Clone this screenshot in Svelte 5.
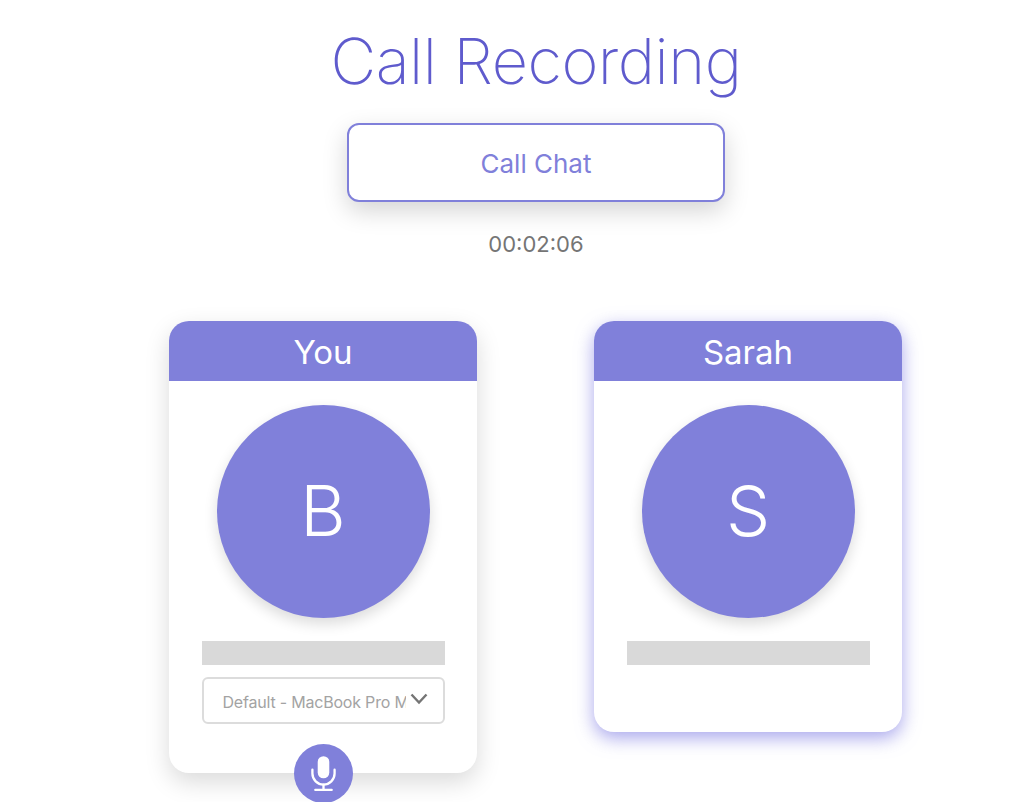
<script lang="ts">
  interface Peer {
    name: string;
    initial: string;
    active: boolean;
    device?: string;
  }

  const peers: Peer[] = [
    { name: 'You', initial: 'B', active: false, device: 'Default - MacBook Pro Microphone' },
    { name: 'Sarah', initial: 'S', active: true },
  ];
</script>

<div class="page">
  <h1>Call Recording</h1>
  <button class="chat">Call Chat</button>
  <div class="timer">00:02:06</div>

  <div class="peers">
    {#each peers as peer (peer.name)}
      <div class="card" class:active={peer.active}>
        <div class="name">{peer.name}</div>
        <div class="body">
          <div class="avatar">{peer.initial}</div>
          <div class="meter"></div>
          {#if peer.device}
            <div class="select">
              <span class="device">{peer.device}</span>
              <svg class="chevron" viewBox="0 0 18 12" width="18" height="12" aria-hidden="true">
                <path d="M1.5 1.5 9 9.5l7.5-8" fill="none" stroke="#757575" stroke-width="2.4" />
              </svg>
            </div>
          {/if}
        </div>
        {#if peer.device}
          <button class="mic" aria-label="Mute microphone">
            <svg viewBox="0 0 28 38" width="27" height="37" aria-hidden="true">
              <rect x="8" y="1" width="12" height="23" rx="6" fill="#fff" />
              <path d="M2.5 15v4a11.5 11.5 0 0 0 23 0v-4" fill="none" stroke="#fff" stroke-width="2.4" stroke-linecap="round" />
              <path d="M14 30.5V35.5M5.5 36h17" fill="none" stroke="#fff" stroke-width="2.4" stroke-linecap="round" />
            </svg>
          </button>
        {/if}
      </div>
    {/each}
  </div>
</div>

<style>
  :global(body) {
    margin: 0;
    background: #fff;
    overflow: hidden;
  }

  .page {
    width: 1072px;
    height: 802px;
    overflow: hidden;
    display: flex;
    flex-direction: column;
    align-items: center;
    font-family: Inter, Lato, sans-serif;
  }

  h1 {
    margin: 20px 0 0;
    font-size: 63px;
    line-height: 83px;
    font-weight: 200;
    letter-spacing: -0.5px;
    color: #5f5bcd;
  }

  .chat {
    margin-top: 20px;
    width: 378px;
    height: 79px;
    box-sizing: border-box;
    padding-top: 2px;
    background: #fff;
    border: 2px solid #8080da;
    border-radius: 12px;
    box-shadow: 0 9px 24px rgba(0, 0, 0, 0.17);
    color: #8080da;
    font-family: inherit;
    font-size: 26px;
    font-weight: 400;
  }

  .timer {
    margin-top: 27px;
    font-size: 22px;
    line-height: 30px;
    color: #757575;
  }

  .peers {
    margin: 62px 1px 0 0;
    display: flex;
    align-items: flex-start;
    gap: 117px;
  }

  .card {
    position: relative;
    width: 308px;
    background: #fff;
    border-radius: 20px;
    box-shadow: 0 9px 24px rgba(0, 0, 0, 0.15);
  }

  .card.active {
    box-shadow: 0 6px 18px rgba(112, 108, 224, 0.6);
  }

  .name {
    height: 60px;
    border-radius: 20px 20px 0 0;
    background: #8080da;
    color: #fff;
    font-size: 33px;
    font-weight: 400;
    line-height: 63px;
    text-align: center;
  }

  .body {
    display: flex;
    flex-direction: column;
    align-items: center;
    padding: 24px 0 49px;
  }

  .card.active .body {
    padding-bottom: 67px;
  }

  .avatar {
    width: 213px;
    height: 213px;
    border-radius: 50%;
    background: #8080da;
    box-shadow: 0 6px 14px rgba(0, 0, 0, 0.14);
    color: #fff;
    font-size: 70px;
    font-weight: 300;
    line-height: 211px;
    text-align: center;
  }

  .meter {
    margin-top: 23px;
    width: 243px;
    height: 24px;
    background: #d9d9d9;
  }

  .select {
    margin-top: 12px;
    width: 243px;
    height: 47px;
    box-sizing: border-box;
    display: flex;
    align-items: center;
    padding: 2px 6px 0 19px;
    border: 2px solid #dcdcdc;
    border-radius: 6px;
    color: #a3a3a3;
    font-size: 16px;
  }

  .device {
    width: 183px;
    overflow: hidden;
    white-space: nowrap;
    letter-spacing: -0.2px;
  }

  .chevron {
    margin: -6px 0 0 4px;
  }

  .mic {
    position: absolute;
    left: 125px;
    bottom: -30px;
    width: 59px;
    height: 59px;
    padding: 0;
    border: 0;
    border-radius: 50%;
    background: #8080da;
    display: flex;
    align-items: center;
    justify-content: center;
  }
</style>
